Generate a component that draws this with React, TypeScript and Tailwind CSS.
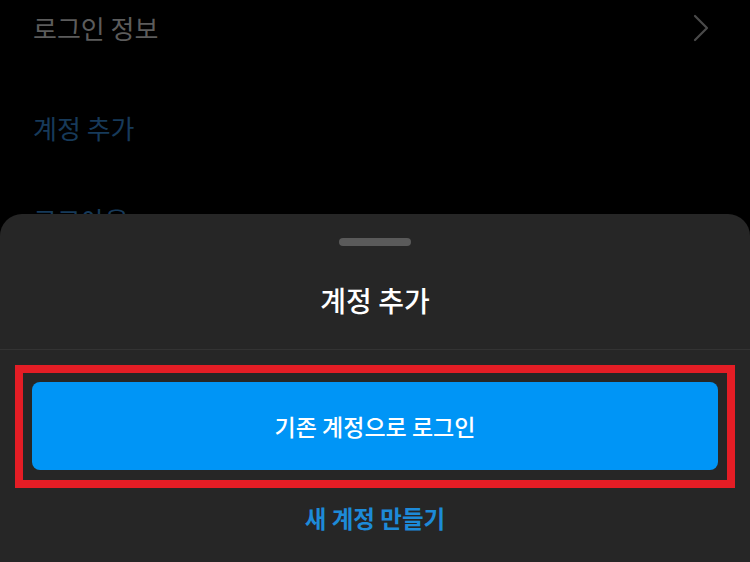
const FONT = "font-['Noto_Sans_CJK_KR','Noto_Sans',sans-serif]";

function Chevron() {
  return (
    <svg width="18" height="30" viewBox="0 0 18 30" fill="none" className="text-[#4a4a4a]">
      <path d="M3 3l12 12L3 27" stroke="currentColor" strokeWidth="2.2" strokeLinecap="round" strokeLinejoin="round" />
    </svg>
  );
}

function SettingsList() {
  return (
    <div className="-mt-[22px] flex flex-col">
      <div className="flex h-[100px] items-center justify-between pl-[33px] pr-[40px]">
        <span className="text-[26px] leading-[36px] text-[#5c5c5c]">로그인 정보</span>
        <Chevron />
      </div>
      <div className="flex h-[100px] items-center pl-[33px]">
        <span className="text-[26px] leading-[36px] text-[#173a5a]">계정 추가</span>
      </div>
      <div className="flex h-[84px] items-center pl-[33px]">
        <span className="text-[26px] leading-[36px] text-[#173a5a]">로그아웃</span>
      </div>
    </div>
  );
}

function AddAccountSheet() {
  return (
    <div className="absolute bottom-0 left-0 right-0 flex h-[348px] flex-col rounded-t-[22px] bg-[#262626]">
      <div className="flex justify-center pt-[24px]">
        <div className="h-[8px] w-[72px] rounded-full bg-[#5a5a5a]" />
      </div>
      <div className="flex h-[103px] items-center justify-center pt-[5px]">
        <h2 className="text-[28px] font-medium leading-[38px] text-white">계정 추가</h2>
      </div>
      <div className="h-px bg-[#333333]" />
      <div className="px-[15px] pt-[15px]">
        <div className="border-[8px] border-[#e41d25] p-[9px] pb-[10px]">
          <button className="flex h-[88px] w-full items-center justify-center rounded-[8px] bg-[#0095f6] text-[23px] font-medium text-white">
            기존 계정으로 로그인
          </button>
        </div>
      </div>
      <div className="mt-[15px] flex justify-center">
        <span className="text-[23.5px] font-semibold leading-[30px] text-[#1d8ad8]">새 계정 만들기</span>
      </div>
    </div>
  );
}

export default function App() {
  return (
    <div className={`relative h-[562px] w-[750px] overflow-hidden bg-black ${FONT}`}>
      <SettingsList />
      <AddAccountSheet />
    </div>
  );
}
